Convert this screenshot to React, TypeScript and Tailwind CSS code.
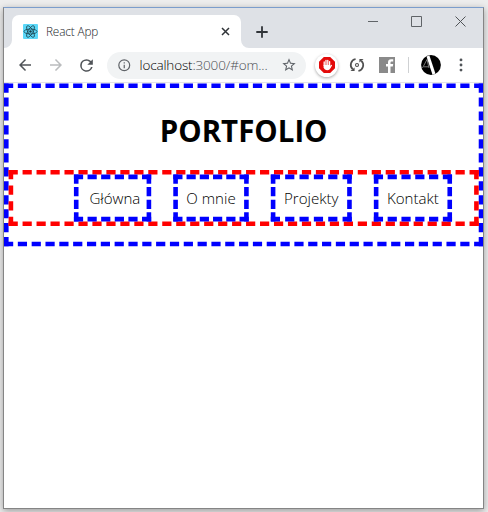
import type { ReactNode } from "react";

const links = [
  { label: "Główna", box: "w-[84px] pl-[5px]", text: "w-[56px]" },
  { label: "O mnie", box: "w-[82px]", text: "w-[54px]" },
  { label: "Projekty", box: "w-[88px]", text: "w-[60px]" },
  { label: "Kontakt", box: "w-[85px]", text: "w-[57px]" },
];

function Icon({ children, className }: { children: ReactNode; className: string }) {
  return (
    <svg viewBox="0 0 24 24" className={`shrink-0 ${className}`} fill="currentColor">
      {children}
    </svg>
  );
}

function ReactLogo() {
  return (
    <svg viewBox="0 0 15 15" className="size-[15px] shrink-0" fill="none" stroke="#173b46" strokeWidth="0.75">
      <rect width="15" height="15" rx="1" fill="#5cd8f8" stroke="none" />
      <ellipse cx="7.5" cy="7.5" rx="6.5" ry="2.5" />
      <ellipse cx="7.5" cy="7.5" rx="6.5" ry="2.5" transform="rotate(60 7.5 7.5)" />
      <ellipse cx="7.5" cy="7.5" rx="6.5" ry="2.5" transform="rotate(120 7.5 7.5)" />
      <circle cx="7.5" cy="7.5" r="1.2" fill="#173b46" stroke="none" />
    </svg>
  );
}

function TabStrip() {
  return (
    <div className="flex h-10 items-end bg-[#dee1e6]">
      <svg viewBox="0 0 8 8" className="size-2 shrink-0" fill="#fff">
        <path d="M8 0v8H0a8 8 0 0 0 8-8z" />
      </svg>
      <div className="flex h-[33px] w-[229px] shrink-0 items-center rounded-t-[7px] bg-white pl-[11px] pr-[11px]">
        <ReactLogo />
        <span className="ml-2 flex-1 whitespace-nowrap text-[11.8px] font-light tracking-[-0.15px] text-[#202428]">React App</span>
        <svg viewBox="0 0 9 9" className="size-[9px]" stroke="#303438" strokeWidth="1.5">
          <path d="M1 1l7 7M8 1L1 8" />
        </svg>
      </div>
      <svg viewBox="0 0 8 8" className="size-2 shrink-0" fill="#fff">
        <path d="M0 0v8h8a8 8 0 0 1-8-8z" />
      </svg>
      <svg viewBox="0 0 12 12" className="mb-[10.5px] ml-[7px] size-3 shrink-0" stroke="#303438" strokeWidth="1.8">
        <path d="M6 0.3v11.4M0.3 6h11.4" />
      </svg>
      <div className="ml-auto flex items-center gap-[33px] self-start pr-[17px] pt-2">
        <svg viewBox="0 0 10 10" className="size-2.5" stroke="#606468">
          <path d="M0 4.5h10" />
        </svg>
        <svg viewBox="0 0 11 11" className="size-[11px]" stroke="#606468" fill="none">
          <path d="M.5.5h10v10H.5z" />
        </svg>
        <svg viewBox="0 0 11 11" className="size-[11px]" stroke="#505458">
          <path d="M.5.5l10 10M10.5.5l-10 10" />
        </svg>
      </div>
    </div>
  );
}

function Toolbar() {
  return (
    <div className="flex h-[35px] items-center border-b border-[#e3e4e5] bg-white pl-[12px] text-[#5f6368]">
      <Icon className="size-[18px] text-[#505458]">
        <path d="M20 11H7.83l5.59-5.59L12 4l-8 8 8 8 1.41-1.41L7.83 13H20v-2z" />
      </Icon>
      <Icon className="ml-[13px] size-[18px] text-[#babcbe]">
        <path d="M12 4l-1.41 1.41L16.17 11H4v2h12.17l-5.58 5.59L12 20l8-8z" />
      </Icon>
      <Icon className="ml-[12px] size-[19px] text-[#505458]">
        <path d="M17.65 6.35A7.96 7.96 0 0 0 12 4a8 8 0 1 0 7.73 10h-2.08A6 6 0 1 1 12 6c1.66 0 3.14.69 4.22 1.78L13 11h7V4l-2.35 2.35z" />
      </Icon>
      <div className="ml-[11px] flex h-[27px] w-[199px] shrink-0 items-center rounded-full bg-[#f1f3f4] pl-[10px] pr-[9px]">
        <Icon className="size-[14.5px]">
          <path d="M11 7h2v2h-2zm0 4h2v6h-2zm1-9a10 10 0 1 0 0 20 10 10 0 0 0 0-20zm0 18a8 8 0 1 1 0-16 8 8 0 0 1 0 16z" />
        </Icon>
        <span className="ml-2 flex-1 whitespace-nowrap text-[13.5px] font-light tracking-[-0.15px] text-[#4a4e53]">
          <span className="text-black">localhost</span>:3000/#om...
        </span>
        <Icon className="size-4">
          <path d="M22 9.24l-7.19-.62L12 2 9.19 8.63 2 9.24l5.46 4.73L5.82 21 12 17.27 18.18 21l-1.63-7.03L22 9.24zM12 15.4l-3.76 2.27 1-4.28-3.32-2.88 4.38-.38L12 6.1l1.71 4.04 4.38.38-3.32 2.88 1 4.28L12 15.4z" />
        </Icon>
      </div>
      <div className="ml-[9px] flex size-[23px] shrink-0 items-center justify-center rounded-full bg-white shadow-[0_1px_3px_#aaa]">
        <svg viewBox="0 0 16 16" className="size-4">
          <path d="M4.8 0h6.4L16 4.8v6.4L11.2 16H4.8L0 11.2V4.8z" fill="#e30b0b" />
          <path d="M5.2 8.5V5M7 8V3.3M8.8 8V3.3M10.6 8V4.6" stroke="#fff" strokeWidth="1.3" strokeLinecap="round" />
          <path d="M4.6 8h6.7v2.2c0 2-1.1 3-3.1 3-1.7 0-2.8-.9-3.6-2.7z" fill="#fff" />
          <path d="M11 10.8l1.4-2.4" stroke="#fff" strokeWidth="1.2" strokeLinecap="round" />
        </svg>
      </div>
      <svg viewBox="0 0 16 16" className="ml-[11px] size-4 shrink-0" fill="none" stroke="#505050" strokeWidth="1.7">
        <path d="M6.6 2A6 6 0 0 0 3.6 12.2" />
        <path d="M9.4 14A6 6 0 0 0 12.4 3.8" />
        <path d="M1.4 14h4.2v-3.6zM14.6 2h-4.2v3.6z" fill="#505050" stroke="none" />
        <circle cx="8" cy="8" r="1.5" strokeWidth="1.1" />
      </svg>
      <svg viewBox="0 0 16 16" className="ml-[14px] size-4 shrink-0">
        <path d="M0 0h16v16H0z" fill="#8a8a8a" />
        <path d="M9 16V9.5H7V7h2V5.5C9 3.2 10.2 2.2 12 2.2h2.2v2.3h-1.5c-.9 0-1.2.4-1.2 1.2V7h2.7l-.4 2.5h-2.3V16z" fill="#fff" />
      </svg>
      <div className="ml-[13px] h-4 w-px shrink-0 bg-[#cfd1d3]" />
      <svg viewBox="0 0 20 20" className="ml-[12px] size-5 shrink-0">
        <circle cx="10" cy="10" r="9.9" fill="#000" />
        <path d="M5.5 1.5L8.4.4l6 18.1-2.9 1.3z" fill="#fff" />
        <path d="M1.5 13L6 4.5 8 13M3 11.8h4.5" stroke="#aaa" strokeWidth=".7" fill="none" />
      </svg>
      <Icon className="ml-[11px] size-[18px] text-[#505458]">
        <circle cx="12" cy="5.2" r="1.9" />
        <circle cx="12" cy="12" r="1.9" />
        <circle cx="12" cy="18.8" r="1.9" />
      </Icon>
    </div>
  );
}

/* The page is displayed at 92% zoom inside the browser viewport. */
function Portfolio() {
  return (
    <main className="h-[176.5px] w-[521px] origin-top-left translate-y-[0.45px] scale-[0.92] border-5 border-dashed border-[#0000ff] text-black">
      <h1 className="flex h-[89px] items-center justify-center pt-[4px] text-[32px] font-bold leading-none">
        PORTFOLIO
      </h1>
      <nav className="flex h-[61px] w-[511px] items-center gap-[24px] border-5 border-dashed border-[#ff0000] pl-[66px]">
        {links.map(({ label, box, text }) => (
          <a
            key={label}
            href="#"
            className={`flex h-[51px] shrink-0 items-center justify-center whitespace-nowrap border-5 border-dashed border-[#0000ff] pt-px text-[16.4px] font-light text-black ${box}`}
          >
            <span className={`flex justify-center ${text}`}>{label}</span>
          </a>
        ))}
      </nav>
    </main>
  );
}

export default function App() {
  return (
    <div className="h-[512px] w-[488px] overflow-hidden bg-[#ededed] pl-[3px] pt-[7px] font-['Open_Sans','Noto_Sans',sans-serif]">
      <div className="h-[502px] w-[481px] overflow-hidden border border-[#858585] border-t-[#7b9dcc] bg-white shadow-[0_2px_7px_rgba(0,0,0,0.35)]">
        <TabStrip />
        <Toolbar />
        <Portfolio />
      </div>
    </div>
  );
}
